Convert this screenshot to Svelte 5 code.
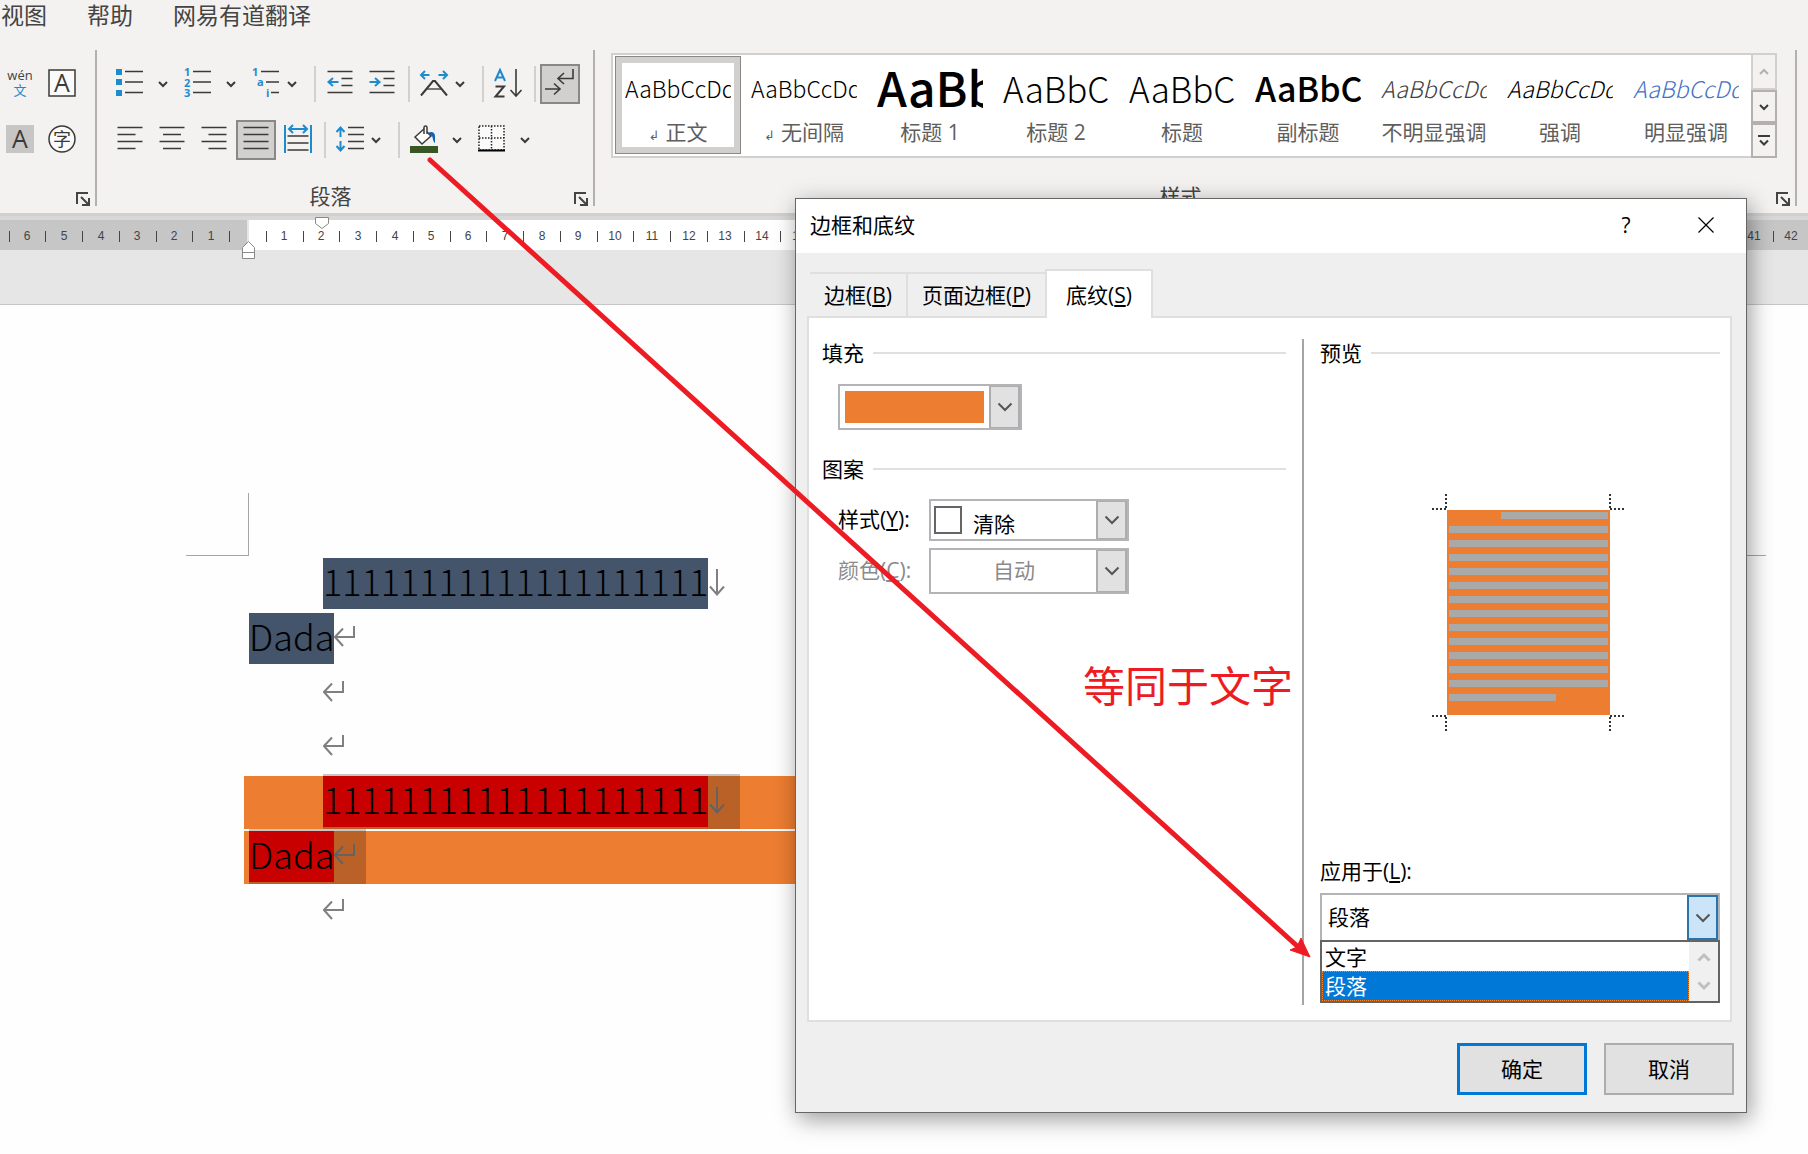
<script lang="ts">
  type Sample = { sample: string; name: string; kind: string; mark?: boolean }

  const menus = ['视图', '帮助', '网易有道翻译']

  const samples: Sample[] = [
    { sample: 'AaBbCcDd', name: '正文', kind: 'normal', mark: true },
    { sample: 'AaBbCcDd', name: '无间隔', kind: 'normal', mark: true },
    { sample: 'AaBb', name: '标题 1', kind: 'heading' },
    { sample: 'AaBbC', name: '标题 2', kind: 'title' },
    { sample: 'AaBbC', name: '标题', kind: 'title' },
    { sample: 'AaBbC', name: '副标题', kind: 'subtitle' },
    { sample: 'AaBbCcDd', name: '不明显强调', kind: 'subtle' },
    { sample: 'AaBbCcDd', name: '强调', kind: 'emphasis' },
    { sample: 'AaBbCcDd', name: '明显强调', kind: 'intense' }
  ]
  let currentStyle = $state('正文')

  // the ruler counts away from the left margin in both directions
  const origin = 248
  const rulerX = (n: number) => Math.floor(origin + (n * 147) / 4)
  const rulerNumbers = Array.from({ length: 50 }, (_, i) => i - 7).filter((n) => n !== 0)
  const rulerTicks = Array.from({ length: 50 }, (_, i) => i - 6.5)

  const tabs = [
    { label: '边框', key: 'B' },
    { label: '页面边框', key: 'P' },
    { label: '底纹', key: 'S' }
  ]
  let activeTab = $state('S')

  const targets = ['文字', '段落']
  let target = $state('段落')

  const previewBars = Array.from({ length: 14 }, (_, i) => ({
    x: i === 0 ? 69 : 17,
    y: 18 + i * 14,
    width: i === 0 || i === 13 ? 107 : 159
  }))
</script>

{#snippet chevron()}
  <svg class="chevron" width="10" height="6" viewBox="0 0 10 6"><path d="M1 1l4 4 4-4" /></svg>
{/snippet}

{#snippet bigChevron()}
  <svg width="16" height="10" viewBox="0 0 16 10"><path d="M1.500 1.500L8 8l6.500-6.500" fill="none" stroke="#555" stroke-width="2" /></svg>
{/snippet}

{#snippet launcher()}
  <button class="launcher" aria-label="更多选项">
    <svg width="14" height="14" viewBox="0 0 14 14">
      <path d="M1 12V1h11M5 5l7 7M13 6v7H6" fill="none" stroke="#444" stroke-width="2" />
    </svg>
  </button>
{/snippet}

{#snippet returnMark()}
  <svg class="mark" width="32" height="51" viewBox="0 0 32 51">
    <path d="M20 13v11H1M9 15.500L1 24l8 9" />
  </svg>
{/snippet}

{#snippet breakMark()}
  <svg class="mark" width="32" height="51" viewBox="0 0 32 51">
    <path d="M9 11v25M2 28.500L9 36.500l7-8" />
  </svg>
{/snippet}

<div class="word">
  <nav class="menus">
    {#each menus as menu}
      <button>{menu}</button>
    {/each}
  </nav>

  <div class="ribbon">
    <section class="group font-group">
      <div class="tools">
        <div class="row">
          <button class="tool" aria-label="拼音指南">
            <svg class="icon" viewBox="0 0 28 28">
              <text x="13" y="10" font-size="13" text-anchor="middle" fill="#444">wén</text>
              <text class="cjk" x="13" y="25" font-size="13" text-anchor="middle" fill="#1e8bcd">文</text>
            </svg>
          </button>
          <button class="tool" aria-label="字符边框">
            <svg class="icon" viewBox="0 0 28 28">
              <rect x="0" y="0" width="26" height="26" fill="#fafafa" stroke="#3b3a39" stroke-width="1.500" />
              <text x="13" y="22" font-size="25" text-anchor="middle" fill="#3b3a39">A</text>
            </svg>
          </button>
        </div>
        <div class="row">
          <button class="tool" aria-label="字符底纹">
            <svg class="icon" viewBox="0 0 28 28">
              <rect x="-1" y="-1" width="28" height="28" fill="#c8c6c4" />
              <text x="13" y="22" font-size="25" text-anchor="middle" fill="#3b3a39">A</text>
            </svg>
          </button>
          <button class="tool" aria-label="带圈字符">
            <svg class="icon" viewBox="0 0 28 28">
              <circle cx="13" cy="13" r="13" fill="#fafafa" stroke="#3b3a39" stroke-width="1.500" />
              <text class="cjk" x="13" y="20" font-size="18" text-anchor="middle" fill="#3b3a39">字</text>
            </svg>
          </button>
        </div>
      </div>
      <footer><span></span>{@render launcher()}</footer>
    </section>

    <section class="group paragraph-group">
      <div class="tools">
        <div class="row">
          <button class="tool" aria-label="项目符号">
            <svg class="icon" viewBox="0 0 28 28">
              <path class="fill-blue" d="M0-1h6v6H0zM0 9h6v6H0zM0 20h6v6H0z" />
              <path class="ink" d="M9 1.500h18M9 12h18M9 22.500h18" />
            </svg>
          </button>
          <button class="split" aria-label="项目符号库">{@render chevron()}</button>
          <button class="tool" aria-label="编号">
            <svg class="icon digits" viewBox="0 0 28 28">
              <text x="0" y="6">1</text><text x="0" y="17">2</text><text x="0" y="27">3</text>
              <path class="ink" d="M9 1.500h18M9 12h18M9 22.500h18" />
            </svg>
          </button>
          <button class="split" aria-label="编号库">{@render chevron()}</button>
          <button class="menu" aria-label="多级列表">
            <span class="slot">
              <svg class="icon digits" viewBox="0 0 28 28">
                <text x="0" y="6">1</text><text x="5" y="16">a</text><text x="14" y="27">i</text>
                <path class="ink" d="M9 1.500h18M14 12h13M19 22.500h8" />
              </svg>
            </span>
            {@render chevron()}
          </button>
          <i class="sep"></i>
          <button class="tool" aria-label="减少缩进量">
            <svg class="icon" viewBox="0 0 28 28">
              <path class="ink" d="M1.500 1.500h25M15.500 8.500h11M15.500 15.500h11M1.500 22.500h25" />
              <path class="blue" d="M12.500 12H3M7 8l-4.500 4L7 16" />
            </svg>
          </button>
          <button class="tool" aria-label="增加缩进量">
            <svg class="icon" viewBox="0 0 28 28">
              <path class="ink" d="M1.500 1.500h25M15.500 8.500h11M15.500 15.500h11M1.500 22.500h25" />
              <path class="blue" d="M1.500 12H11M7 8l4.500 4L7 16" />
            </svg>
          </button>
          <i class="sep"></i>
          <button class="menu" aria-label="中文版式">
            <span class="slot">
              <svg class="icon" viewBox="0 0 28 28">
                <path class="blue" d="M9.500 5H1M5 1L1 5l4 4M18.500 5H27M23 1l4 4-4 4" />
                <path d="M7 19h14" fill="none" stroke="#777" stroke-width="2" />
                <path class="ink thick" d="M1 25.500L13 11h2l12 14.500" />
              </svg>
            </span>
            {@render chevron()}
          </button>
          <i class="sep"></i>
          <button class="tool" aria-label="排序">
            <svg class="icon" viewBox="0 0 28 28">
              <path class="blue thick" d="M1 11L6 0l5 11M3 7.500h6" />
              <path class="ink thick" d="M1.500 16.500h8.500L1.500 26.500h9" />
              <path class="ink" d="M22-1v26M16.500 20l5.500 6 5.500-6" />
            </svg>
          </button>
          <i class="sep"></i>
          <button class="tool pressed" aria-label="显示编辑标记">
            <svg class="icon" viewBox="0 0 28 28">
              <path class="ink" d="M27-1v9.500H12M18 3l-6 5.500 6 5.500M-1 19h15M8 13.500l6 5.500-6 5.500" />
            </svg>
          </button>
        </div>

        <div class="row">
          <button class="tool" aria-label="左对齐">
            <svg class="icon" viewBox="0 0 28 28"><path class="ink" d="M1.500 1.500h25M1.500 8.500h18M1.500 15.500h25M1.500 22.500h18" /></svg>
          </button>
          <button class="tool" aria-label="居中">
            <svg class="icon" viewBox="0 0 28 28"><path class="ink" d="M1.500 1.500h25M5 8.500h18M1.500 15.500h25M5 22.500h18" /></svg>
          </button>
          <button class="tool" aria-label="右对齐">
            <svg class="icon" viewBox="0 0 28 28"><path class="ink" d="M1.500 1.500h25M8.500 8.500h18M1.500 15.500h25M8.500 22.500h18" /></svg>
          </button>
          <button class="tool pressed" aria-label="两端对齐">
            <svg class="icon" viewBox="0 0 28 28"><path class="ink" d="M1.500 1.500h25M1.500 8.500h25M1.500 15.500h25M1.500 22.500h25" /></svg>
          </button>
          <button class="tool" aria-label="分散对齐">
            <svg class="icon" viewBox="0 0 28 28">
              <path class="ink" d="M3.500 10h21M3.500 17h21M3.500 24h21" />
              <path class="blue" d="M1-1v28M27-1v28M5 3h18M9-1L5 3l4 4M19-1l4 4-4 4" />
            </svg>
          </button>
          <i class="sep"></i>
          <button class="menu" aria-label="行和段落间距">
            <span class="slot">
              <svg class="icon" viewBox="0 0 28 28">
                <path class="ink" d="M12 1.500h16M12 8.500h16M12 15.500h16M12 22.500h16" />
                <path class="blue" d="M4.500 11V2M.5 6l4-4.500 4 4.500M4.500 15v9M.5 20l4 4.500 4-4.500" />
              </svg>
            </span>
            {@render chevron()}
          </button>
          <i class="sep"></i>
          <button class="tool" aria-label="底纹">
            <svg class="icon" viewBox="0 0 28 28">
              <path d="M5 11l9-8 7 7-9 8z" fill="#fff" stroke="#3b3a39" stroke-width="1.500" />
              <path d="M14 8V1.500a1.500 1.500 0 0 1 3 0V8" fill="#fff" stroke="#3b3a39" stroke-width="1.500" />
              <path d="M18 7c3-2 7-1 7 3v7c-2-1-2-5-3-7z" fill="#0f63b0" />
              <path d="M0 20h28v7H0z" fill="#375623" />
            </svg>
          </button>
          <button class="split" aria-label="底纹颜色">{@render chevron()}</button>
          <button class="tool" aria-label="边框">
            <svg class="icon" viewBox="0 0 28 28">
              <path d="M1 0h25v24h-25zM13.500 0v24M1 12h25" fill="#fafafa" stroke="#222" stroke-width="1.500" stroke-dasharray="1.500 1.500" />
              <path d="M0 24.500h27" stroke="#000" stroke-width="2" />
            </svg>
          </button>
          <button class="split" aria-label="边框类型">{@render chevron()}</button>
        </div>
      </div>
      <footer><span>段落</span>{@render launcher()}</footer>
    </section>

    <section class="group styles-group">
      <div class="gallery">
        <div class="samples">
          {#each samples as item}
            <button class="sample" class:selected={currentStyle === item.name} onclick={() => (currentStyle = item.name)}>
              <span class="preview {item.kind}">{item.sample}</span>
              <span class="name">{#if item.mark}<small>↲</small>{/if}{item.name}</span>
            </button>
          {/each}
        </div>
        <div class="scroller">
          <button disabled aria-label="向上">
            <svg class="chevron" width="10" height="6" viewBox="0 0 10 6"><path d="M1 5l4-4 4 4" /></svg>
          </button>
          <button aria-label="向下">{@render chevron()}</button>
          <button aria-label="其他">
            <svg class="chevron" width="12" height="12" viewBox="0 0 12 12"><path d="M0 1h12M2 5.500l4 4 4-4" /></svg>
          </button>
        </div>
      </div>
      <footer><span>样式</span>{@render launcher()}</footer>
    </section>
  </div>

  <svg class="ruler" width="100%" height="30">
    <rect x={origin} width="1456" height="30" fill="#fff" />
    <rect x={origin - 1} width="2" height="30" fill="#e6e6e6" />
    {#each rulerTicks as n}
      <rect x={rulerX(n)} y="11" width="1" height="11" fill="#444" />
    {/each}
    {#each rulerNumbers as n}
      <text x={rulerX(n)} y="20">{Math.abs(n)}</text>
    {/each}
    <path class="stop" d="M315.500-2.500h13v6l-6.500 5-6.500-5z" />
    <path class="stop" d="M248.500 21.500l6 6v11h-12v-11zM242.500 32.500h12" />
  </svg>

  <main>
    <div class="page">
      <div class="corners">
        <div class="corner left"></div>
        <div class="corner right"></div>
      </div>
      <div class="text">
        <p class="indent"><span class="run navy">11111111111111111111</span>{@render breakMark()}</p>
        <p><span class="run navy">Dada</span>{@render returnMark()}</p>
        <p class="indent empty">{@render returnMark()}</p>
        <p class="indent empty">{@render returnMark()}</p>
        <p class="indent shaded">
          <span class="selection"><span class="run red">11111111111111111111</span>{@render breakMark()}</span>
        </p>
        <p class="shaded">
          <span class="selection"><span class="run red">Dada</span>{@render returnMark()}</span>
        </p>
        <p class="indent empty">{@render returnMark()}</p>
      </div>
    </div>
  </main>

  <div class="dialog" role="dialog" aria-labelledby="dialog-title">
    <header>
      <h1 id="dialog-title">边框和底纹</h1>
      <button aria-label="帮助">?</button>
      <button aria-label="关闭">
        <svg width="16" height="16" viewBox="0 0 16 16"><path d="M.5.5l15 15M15.500.5l-15 15" stroke="#000" stroke-width="1.200" /></svg>
      </button>
    </header>

    <div class="body">
      <div class="tabs" role="tablist">
        {#each tabs as tab}
          <button role="tab" aria-selected={activeTab === tab.key} class:active={activeTab === tab.key} onclick={() => (activeTab = tab.key)}>
            {tab.label}(<u>{tab.key}</u>)
          </button>
        {/each}
      </div>

      <div class="panel">
        <div class="settings">
          <h2>填充</h2>
          <button class="combo fill" aria-label="填充颜色">
            <span class="swatch"></span>
            <span class="drop">{@render bigChevron()}</span>
          </button>

          <h2>图案</h2>
          <div class="fields">
            <label for="pattern">样式(<u>Y</u>):</label>
            <div class="combo pattern">
              <select id="pattern"><option>清除</option></select>
              <span class="box"></span>
              <span class="drop">{@render bigChevron()}</span>
            </div>
            <label for="color" class="disabled">颜色(<u>C</u>):</label>
            <div class="combo">
              <select id="color" disabled><option>自动</option></select>
              <span class="drop">{@render bigChevron()}</span>
            </div>
          </div>
        </div>

        <div class="result">
          <h2>预览</h2>
          <svg class="sheet" width="193" height="237" viewBox="0 0 193 237">
            <rect x="15" y="16" width="163" height="205" fill="#ed7d31" />
            {#each previewBars as bar}
              <rect x={bar.x} y={bar.y} width={bar.width} height="7" fill="#a9a9a9" />
            {/each}
            <path
              d="M14 0v14M0 15h14M178 0v14M178 15h14M14 237v-14M0 222h14M178 237v-14M178 222h14"
              fill="none" stroke="#333" stroke-width="2" stroke-dasharray="2 2"
            />
          </svg>

          <div class="apply">
            <label for="target">应用于(<u>L</u>):</label>
            <div class="combo open">
              <select id="target" bind:value={target}>
                {#each targets as name}
                  <option>{name}</option>
                {/each}
              </select>
              <span class="drop">{@render bigChevron()}</span>
            </div>
            <div class="list">
              <div class="options" role="listbox" aria-label="应用于" tabindex="-1">
                {#each targets as name}
                  <button role="option" aria-selected={target === name} class:chosen={target === name} onclick={() => (target = name)}>{name}</button>
                {/each}
              </div>
              <div class="scrollbar">
                <svg width="14" height="10" viewBox="0 0 14 10"><path d="M1.500 8.500L7 3l5.500 5.500" /></svg>
                <svg width="14" height="10" viewBox="0 0 14 10"><path d="M1.500 1.500L7 7l5.500-5.500" /></svg>
              </div>
            </div>
          </div>
        </div>
      </div>
    </div>

    <div class="actions">
      <button class="primary">确定</button>
      <button>取消</button>
    </div>
  </div>

  <svg class="arrow" width="1320" height="970" viewBox="0 0 1320 970">
    <path d="M430 160l866 785" stroke="#ed1c24" stroke-width="5" stroke-linecap="round" />
    <path d="M1310 957l-20-7 7-3 4-9z" fill="#ed1c24" stroke="#ed1c24" />
  </svg>
  <div class="note">等同于文字</div>
</div>

<style>
  :global(body) {
    margin: 0;
    background: #fefefe;
  }

  .word {
    position: relative;
    min-height: 100vh;
    overflow: hidden;
    font-family: "Open Sans", "Noto Sans CJK SC", sans-serif;
    font-size: 21px;
    color: #000;
  }

  button {
    margin: 0;
    padding: 0;
    border: 0;
    border-radius: 0;
    background: none;
    font: inherit;
    color: inherit;
  }

  .menus {
    display: flex;
    gap: 40px;
    height: 34px;
    padding-left: 1px;
    background: #f3f2f1;
    color: #444;
    font-size: 23px;
    line-height: 30px;
  }
  .menus button {
    height: 30px;
    white-space: nowrap;
  }

  .ribbon {
    display: flex;
    padding: 16px 11px 7px 0;
    background: #f3f2f1;
    border-bottom: 3px solid #d2d0ce;
    box-shadow: 0 4px #d8d8d8;
    margin-bottom: 4px;
  }
  .group {
    display: flex;
    flex-direction: column;
    justify-content: space-between;
    height: 156px;
    border-right: 2px solid #b3b0ad;
  }
  .font-group {
    width: 95px;
  }
  .paragraph-group {
    width: 496px;
  }
  .styles-group {
    flex: 1;
    min-width: 0;
  }
  .group footer {
    display: flex;
    align-items: flex-end;
    gap: 10px;
    padding-right: 5px;
    color: #444;
    line-height: 20px;
  }
  .group footer span {
    flex: 1;
    text-align: center;
  }
  .launcher {
    display: flex;
  }

  .tools {
    display: grid;
    gap: 16px;
    padding-top: 14px;
  }
  .paragraph-group .tools {
    padding-left: 12px;
  }
  .row {
    display: flex;
    align-items: center;
    height: 40px;
  }
  .tool,
  .slot {
    display: flex;
    align-items: center;
    justify-content: center;
    width: 42px;
    height: 40px;
    flex: none;
  }
  .pressed {
    width: 40px;
    margin: 0 1px;
    box-sizing: border-box;
    border: 2px solid #8a8886;
    background: #d2d0ce;
  }
  .split {
    display: flex;
    align-items: center;
    justify-content: center;
    width: 26px;
    height: 40px;
    padding-right: 2px;
    box-sizing: border-box;
  }
  .menu {
    display: flex;
    align-items: center;
    width: 64px;
  }
  .sep {
    width: 2px;
    height: 36px;
    margin: 0 3px 0 5px;
    background: #d2d0ce;
  }
  .icon {
    width: 28px;
    height: 28px;
    overflow: visible;
    flex: none;
  }
  .icon text {
    font-family: "Open Sans", sans-serif;
  }
  .icon .cjk {
    font-family: "Noto Sans CJK SC", sans-serif;
  }
  .digits text {
    font-size: 11px;
    font-weight: bold;
    fill: #1e8bcd;
  }
  .ink,
  .blue {
    fill: none;
    stroke: #3b3a39;
    stroke-width: 1.6;
  }
  .blue {
    stroke: #1e8bcd;
    stroke-width: 2;
  }
  .thick {
    stroke-width: 2;
  }
  .fill-blue {
    fill: #1e8bcd;
  }
  .chevron {
    flex: none;
    overflow: visible;
    fill: none;
    stroke: #3b3a39;
    stroke-width: 2;
  }

  .gallery {
    display: flex;
    margin: 3px 18px 0 16px;
  }
  .samples {
    display: flex;
    flex: 1;
    min-width: 0;
    height: 98px;
    padding: 1px 2px 2px;
    overflow: hidden;
    border: 2px solid #d2d0ce;
    border-right: 0;
    background: #fff;
  }
  .sample {
    display: flex;
    flex-direction: column;
    flex: none;
    width: 126px;
    height: 98px;
    padding: 1px 10px 0;
    box-sizing: border-box;
  }
  .sample.selected {
    box-shadow: inset 0 0 0 1px #8a8886, inset 0 0 0 7px #d2d0ce;
  }
  .preview {
    width: 106px;
    height: 62px;
    overflow: hidden;
    font-family: "Noto Sans CJK SC", sans-serif;
    font-size: 23px;
    font-weight: 300;
    line-height: 62px;
    text-align: left;
    white-space: nowrap;
  }
  .heading {
    font-size: 48px;
    font-weight: 500;
    line-height: 58px;
  }
  .title {
    font-size: 35px;
  }
  .subtitle {
    font-size: 34px;
    font-weight: 500;
  }
  .subtle,
  .emphasis,
  .intense {
    font-style: italic;
  }
  .subtle {
    color: #404040;
  }
  .intense {
    color: #4472c4;
  }
  .name {
    width: 106px;
    color: #605e5c;
    line-height: 26px;
    text-align: center;
    white-space: nowrap;
  }
  .name small {
    margin-right: 6px;
    font-family: "DejaVu Sans", sans-serif;
    font-size: 13px;
  }
  .scroller {
    display: grid;
    grid-template-rows: 37px 33px 35px;
    width: 26px;
  }
  .scroller button {
    display: flex;
    align-items: center;
    justify-content: center;
    border: 2px solid #b3b0ad;
  }
  .scroller button:disabled {
    border-color: #d2d0ce;
  }
  .scroller button:disabled .chevron {
    stroke: #b3b0ad;
  }

  .ruler {
    display: block;
    overflow: visible;
    position: relative;
    background: #c6c6c6;
  }
  .ruler text {
    font-family: "Liberation Sans", sans-serif;
    font-size: 12px;
    text-anchor: middle;
    fill: #444;
  }
  .stop {
    fill: #fff;
    stroke: #8a8886;
  }

  main {
    padding-top: 54px;
    background: #e6e6e6;
  }
  .page {
    border-top: 1px solid #c6c6c6;
    background: #fefefe;
  }
  .corners {
    display: flex;
    justify-content: space-between;
    padding: 188px 42px 2px 186px;
  }
  .corner {
    width: 62px;
    height: 62px;
    border-bottom: 1px solid #a6a6a6;
  }
  .corner.left {
    border-right: 1px solid #a6a6a6;
  }
  .corner.right {
    border-left: 1px solid #a6a6a6;
  }
  .text {
    padding: 0 104px 0 249px;
    font-family: "Noto Sans CJK SC", sans-serif;
    font-size: 36px;
    font-weight: 300;
  }
  .text p {
    display: flex;
    align-items: flex-start;
    height: 55px;
    margin: 0;
  }
  .text .indent {
    padding-left: 74px;
  }
  .text .empty {
    height: 54px;
  }
  .text .shaded {
    height: 53px;
    margin: 0 0 2px -5px;
    padding-left: 5px;
    background: #ed7d31;
  }
  .text .shaded.indent {
    padding-left: 79px;
  }
  .run {
    height: 51px;
    line-height: 44px;
  }
  .navy {
    background: #44546a;
  }
  .red {
    background: #c80000;
  }
  .selection {
    display: flex;
    height: 53px;
    margin-top: -2px;
    padding-top: 2px;
    background: rgba(0, 0, 0, 0.22);
  }
  .mark {
    fill: none;
    stroke: #808080;
    stroke-width: 2;
  }
  .selection .mark {
    stroke: #636363;
  }

  .dialog {
    position: absolute;
    top: 198px;
    left: 795px;
    width: 950px;
    border: 1px solid #666;
    background: #efefef;
    box-shadow: 3px 6px 22px rgba(0, 0, 0, 0.4);
  }
  .dialog header {
    display: flex;
    height: 54px;
    padding-left: 14px;
    background: #fff;
    line-height: 52px;
  }
  .dialog h1 {
    flex: 1;
    margin: 0;
    font-size: 21px;
    font-weight: 400;
  }
  .dialog header button {
    display: flex;
    align-items: center;
    justify-content: center;
    width: 80px;
    height: 52px;
  }
  .body {
    padding: 16px 14px 0 11px;
  }
  .tabs {
    display: flex;
    align-items: flex-end;
    height: 47px;
    padding-left: 3px;
  }
  .tabs button {
    height: 44px;
    padding: 0 14px;
    border-top: 2px solid #dfdfdf;
    border-right: 2px solid #dfdfdf;
    line-height: 40px;
  }
  .tabs .active {
    position: relative;
    height: 49px;
    margin: 0 0 -2px -2px;
    padding: 0 19px;
    border-left: 2px solid #dfdfdf;
    background: #fff;
    line-height: 42px;
  }
  .panel {
    display: flex;
    height: 666px;
    padding: 21px 10px 15px 13px;
    border: 2px solid #dfdfdf;
    background: #fff;
  }
  .settings {
    flex: 1;
    padding-right: 16px;
    border-right: 2px solid #a5a5a5;
  }
  .result {
    display: flex;
    flex-direction: column;
    width: 400px;
    padding-left: 16px;
  }
  .panel h2 {
    display: flex;
    align-items: center;
    gap: 9px;
    margin: 0 0 2px;
    font-size: 21px;
    font-weight: 400;
    line-height: 28px;
  }
  .panel h2::after {
    content: "";
    flex: 1;
    height: 2px;
    background: #e0e0e0;
  }

  .combo {
    display: grid;
    grid-template-columns: 1fr 31px;
    height: 46px;
    box-sizing: border-box;
    border: 2px solid #b4b4b8;
    background: #fff;
  }
  .combo select {
    grid-area: 1 / 1 / 2 / 3;
    width: 100%;
    padding: 0 0 2px 62px;
    border: 0;
    appearance: none;
    background: none;
    font: inherit;
    color: inherit;
    opacity: 1;
  }
  .combo select:disabled {
    color: #8a8a8a;
  }
  .drop {
    display: flex;
    grid-area: 1 / 2;
    align-items: center;
    justify-content: center;
    border: 2px solid #adadad;
    border-width: 1px 2px;
    background: #e1e1e1;
    pointer-events: none;
  }
  .fill {
    width: 184px;
    margin: 17px 0 25px 16px;
  }
  .swatch {
    margin: 5px;
    background: #ed7d31;
  }
  .fields {
    display: grid;
    grid-template-columns: 91px 200px;
    gap: 7px 0;
    align-items: center;
    padding: 14px 0 0 16px;
  }
  .fields label {
    padding-bottom: 4px;
  }
  .disabled {
    color: #8a8a8a;
  }
  .pattern {
    height: 42px;
  }
  .pattern select {
    padding: 8px 0 0 42px;
  }
  .box {
    grid-area: 1 / 1;
    align-self: center;
    width: 24px;
    height: 24px;
    margin-left: 3px;
    border: 2px solid #666;
    pointer-events: none;
  }

  .sheet {
    align-self: center;
    margin: 125px 0 0 16px;
  }
  .apply {
    margin-top: auto;
    padding-bottom: 2px;
  }
  .apply label {
    display: block;
    line-height: 30px;
  }
  .open {
    height: 47px;
    margin-top: 7px;
    border-bottom: 0;
  }
  .open select {
    padding-left: 6px;
  }
  .open .drop {
    border: 2px solid #2a74ae;
    background: #cce4f7;
  }
  .list {
    display: flex;
    border: 2px solid #646464;
    background: #fff;
  }
  .options {
    display: grid;
    grid-template-rows: 29px 30px;
    flex: 1;
  }
  .options button {
    padding-left: 3px;
    line-height: 28px;
    text-align: left;
  }
  .options .chosen {
    outline: 1px dotted #ff8728;
    outline-offset: -1px;
    background: #0078d7;
    color: #fff;
  }
  .scrollbar {
    display: flex;
    flex-direction: column;
    align-items: center;
    justify-content: space-around;
    width: 29px;
    background: #f0f0f0;
  }
  .scrollbar path {
    fill: none;
    stroke: #bfbfbf;
    stroke-width: 3;
  }

  .actions {
    display: flex;
    justify-content: flex-end;
    gap: 17px;
    padding: 21px 12px 17px;
  }
  .actions button {
    width: 130px;
    height: 52px;
    padding-bottom: 2px;
    border: 2px solid #adadad;
    background: #e1e1e1;
  }
  .actions .primary {
    border: 3px solid #0078d7;
  }

  .arrow {
    position: absolute;
    top: 0;
    left: 0;
    pointer-events: none;
  }
  .note {
    position: absolute;
    top: 656px;
    left: 1083px;
    color: #ed1c24;
    font-size: 42px;
    line-height: 60px;
    white-space: nowrap;
  }
</style>
